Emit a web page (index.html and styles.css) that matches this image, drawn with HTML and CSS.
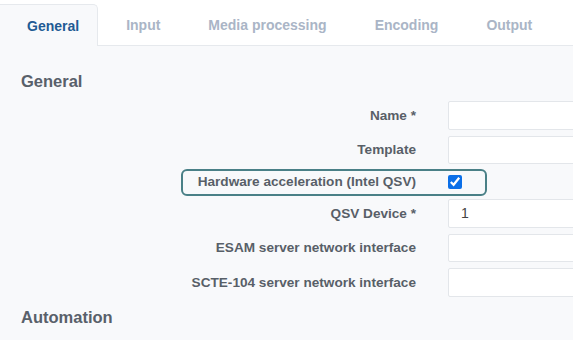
FILE: index.html
```html
<!DOCTYPE html>
<html lang="en">

<head>
	<title>Channel settings</title>
	<meta charset="UTF-8">
	<meta name="viewport" content="width=device-width, initial-scale=1.0">
	<link rel="stylesheet" href="styles.css">
</head>

<body>
	<ul class="tabs">
		<li class="tab active">General</li>
		<li class="tab">Input</li>
		<li class="tab">Media processing</li>
		<li class="tab">Encoding</li>
		<li class="tab">Output</li>
	</ul>

	<div class="panel">
		<h3 class="section">General</h3>

		<form class="form">
			<div class="row">
				<label for="name">Name *</label>
				<input type="text" id="name" class="field">
			</div>
			<div class="row">
				<label for="template">Template</label>
				<input type="text" id="template" class="field">
			</div>
			<div class="row row-check">
				<span class="highlight"></span>
				<label for="hwaccel">Hardware acceleration (Intel QSV)</label>
				<input type="checkbox" id="hwaccel" class="check" checked>
			</div>
			<div class="row">
				<label for="qsv">QSV Device *</label>
				<input type="text" id="qsv" class="field" value="1">
			</div>
			<div class="row">
				<label for="esam">ESAM server network interface</label>
				<input type="text" id="esam" class="field">
			</div>
			<div class="row">
				<label for="scte">SCTE-104 server network interface</label>
				<input type="text" id="scte" class="field">
			</div>
		</form>

		<h3 class="section section-next">Automation</h3>
	</div>
</body>

</html>
```

FILE: styles.css
```css
* {
	box-sizing: border-box;
}

body {
	margin: 0;
	background-color: #fff;
	font-family: "Liberation Sans", Arial, sans-serif;
	overflow: hidden;
}

.tabs {
	display: flex;
	margin: 0;
	padding: 4px 0 0 0;
	list-style: none;
	border-bottom: 1px solid #e6e9ed;
}

.tab {
	height: 41px;
	line-height: 43px;
	padding: 0 24px;
	font-size: 14px;
	font-weight: bold;
	color: #aab5c6;
}

.tab.active {
	padding: 0 18px 0 27px;
	margin: 0 4px -1px 0;
	height: 42px;
	color: #1f5b94;
	background-color: #f8f9fb;
	border: 1px solid #e6e9ed;
	border-left: none;
	border-bottom: none;
	border-radius: 0 5px 0 0;
}

.panel {
	background-color: #f8f9fb;
	padding: 0 0 20px 21px;
	min-height: 300px;
}

.section {
	margin: 0;
	padding-top: 25px;
	line-height: 20px;
	font-size: 16.5px;
	font-weight: bold;
	color: #58606a;
}

.section-next {
	padding-top: 4px;
}

.form {
	margin-top: 10px;
}

.row {
	position: relative;
	display: grid;
	grid-template-columns: 395px 220px;
	column-gap: 32px;
	align-items: center;
	height: 28.5px;
	margin-bottom: 6px;
}

.row-check {
	height: 23px;
}

.row label {
	text-align: right;
	font-size: 13.6px;
	font-weight: bold;
	color: #585f68;
}

.field {
	height: 28.5px;
	padding: 0 12px;
	border: 1px solid #e3e6ea;
	border-radius: 2px;
	background-color: #fff;
	font-family: inherit;
	font-size: 14px;
	color: #444;
}

.check {
	margin: 0;
	width: 14px;
	height: 14px;
	accent-color: #0b6fe8;
}

/* annotation frame around the QSV option */
.highlight {
	position: absolute;
	left: 160px;
	top: -1px;
	width: 306px;
	height: 27px;
	border: 2px solid #4a8087;
	border-radius: 6px;
}
```
